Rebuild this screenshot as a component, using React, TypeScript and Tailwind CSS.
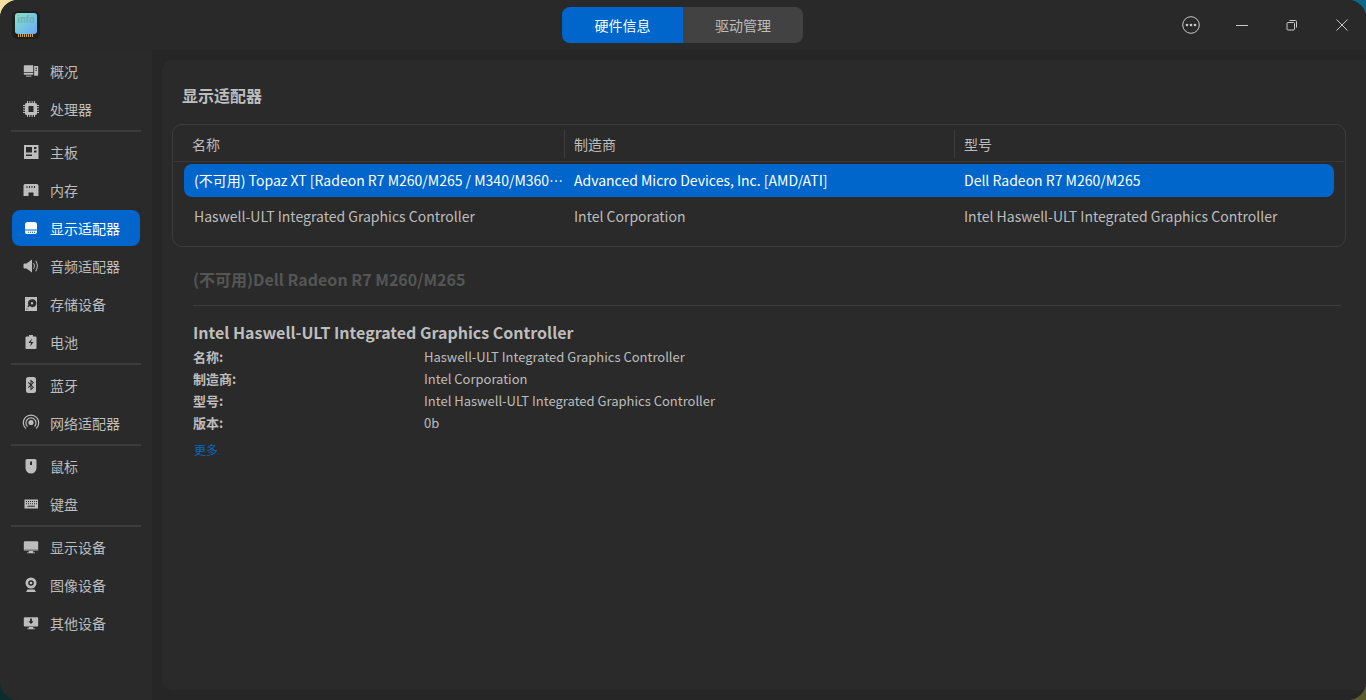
import type { ReactNode } from 'react';

const ICO = 'w-[18px] h-[18px] fill-current';

const icons: Record<string, ReactNode> = {
  overview: (
    <svg viewBox="-1 -1 20 20" className={ICO}>
      <path d="M1 3.500a1 1 0 0 1 1-1h9.500v8H1z" />
      <path d="M1 11.200h10.500v1.300a.8.800 0 0 1-.8.800H1.800a.8.800 0 0 1-.8-.8z" />
      <rect x="3.500" y="14.200" width="6" height="1" />
      <path fillRule="evenodd" d="M12.500 3.500h3.600a.9.900 0 0 1 .9.900v9a.9.900 0 0 1-.9.900h-3.600zM14 5.500v1h1.600v-1zm0 2.200v1h1.600v-1z" />
    </svg>
  ),
  cpu: (
    <svg viewBox="0 0 18 18" className={ICO}>
      <path fillRule="evenodd" d="M4.500 3h9A1.500 1.500 0 0 1 15 4.500v9a1.500 1.500 0 0 1-1.500 1.500h-9A1.500 1.500 0 0 1 3 13.500v-9A1.500 1.500 0 0 1 4.500 3zM6.500 6v6h5V6z" />
      <path d="M5 1h1v2H5zm2.300 0h1v2h-1zm2.400 0h1v2h-1zM12 1h1v2h-1zM5 15h1v2H5zm2.300 0h1v2h-1zm2.400 0h1v2h-1zM12 15h1v2h-1zM1 5h2v1H1zm0 2.300h2v1H1zm0 2.400h2v1H1zM1 12h2v1H1zm14-7h2v1h-2zm0 2.300h2v1h-2zm0 2.400h2v1h-2zM15 12h2v1h-2z" />
    </svg>
  ),
  board: (
    <svg viewBox="0 0 18 18" className={ICO}>
      <path fillRule="evenodd" d="M2 2h14.500v14H2zM4 4v5.500h6V4zm8 0v2h2.500V4zm0 3.500v2h2.500v-2zM4 11.500v1.500h6v-1.500z" />
    </svg>
  ),
  memory: (
    <svg viewBox="0 0 18 18" className={ICO}>
      <path fillRule="evenodd" d="M2.500 3h13l1 1.500V15h-5v-3.500h-5V15h-5V4.500zM4.500 5v2h1V5zm2.500 0v2h1V5zm2.500 0v2h1V5zM12 5v2h1V5z" />
    </svg>
  ),
  display: (
    <svg viewBox="0 0 18 18" className={ICO}>
      <path d="M5.500 3h7A2.500 2.500 0 0 1 15 5.500V10.500H3V5.500A2.500 2.500 0 0 1 5.500 3z" />
      <path fillRule="evenodd" d="M3 11.500h12v1.500a2 2 0 0 1-2 2H5a2 2 0 0 1-2-2zM6 12.800v1h1v-1zm2 0v1h1v-1zm2 0v1h1v-1zm2 0v1h1v-1z" />
    </svg>
  ),
  audio: (
    <svg viewBox="0 0 18 18" className={ICO}>
      <path d="M2.500 6.500h2L10 2.500v13l-5.500-4h-2a1 1 0 0 1-1-1v-3a1 1 0 0 1 1-1z" />
      <path d="M11.800 5.800c1.400 2 1.400 4.400 0 6.400l-.7-.6c1.100-1.700 1.100-3.500 0-5.200z" />
      <path d="M14 3.500c2.400 3.300 2.400 7.700 0 11l-.7-.6c2-2.900 2-6.900 0-9.800z" />
    </svg>
  ),
  disk: (
    <svg viewBox="0 0 18 18" className={ICO}>
      <path fillRule="evenodd" d="M3 2h12v14H3zM10 4.200a4 4 0 0 0-3.600 5.800l-1 1.500 1 .8 1.300-1.200a4 4 0 1 0 2.300-6.900zm0 2.800a1.200 1.200 0 1 1 0 2.400 1.200 1.200 0 0 1 0-2.400zM4.500 13.500v1h1v-1z" />
    </svg>
  ),
  battery: (
    <svg viewBox="0 0 18 18" className={ICO}>
      <path fillRule="evenodd" d="M7 2h4v1.500h2.500a1 1 0 0 1 1 1V15a1 1 0 0 1-1 1h-9a1 1 0 0 1-1-1V4.500a1 1 0 0 1 1-1H7zM9.800 5.500 6.500 10H9l-.8 3.500L11.500 9H9z" />
    </svg>
  ),
  bluetooth: (
    <svg viewBox="0 0 18 18" className={ICO}>
      <path fillRule="evenodd" d="M6.500 1h5A2.500 2.500 0 0 1 14 3.500v11a2.500 2.500 0 0 1-2.500 2.500h-5A2.500 2.500 0 0 1 4 14.500v-11A2.500 2.500 0 0 1 6.500 1zM8.500 3.500v4.200L6.600 6l-.7.700L8.200 9l-2.300 2.300.7.700 1.900-1.700v4.200l3.500-3L9.700 9 12 6.500zm1 2.200 1.200 1L9.500 8zm0 4.300 1.200 1.300-1.200 1z" />
    </svg>
  ),
  network: (
    <svg viewBox="0 0 18 18" className={ICO}>
      <circle cx="9" cy="8.500" r="2.600" />
      <path fill="none" stroke="currentColor" strokeWidth="1.200" d="M5.500 12.500a5 5 0 1 1 7 0" />
      <path fill="none" stroke="currentColor" strokeWidth="1.200" d="M3.800 14.500a7.700 7.700 0 1 1 10.400 0" />
    </svg>
  ),
  mouse: (
    <svg viewBox="0 0 18 18" className={ICO}>
      <path fillRule="evenodd" d="M5 2h8a1.500 1.500 0 0 1 1.500 1.500V11a5.500 5.500 0 0 1-11 0V3.500A1.500 1.500 0 0 1 5 2zM8 4.500V8h2V4.500z" />
    </svg>
  ),
  keyboard: (
    <svg viewBox="0 0 18 18" className={ICO}>
      <path fillRule="evenodd" d="M2.500 4.500h13.500v9H2.500zM4 6v1h1V6zm2 0v1h1V6zm2 0v1h1V6zm2 0v1h1V6zm2 0v1h1V6zm2 0v1h1V6zM4 8.300v1h1v-1zm2 0v1h1v-1zm2 0v1h1v-1zm2 0v1h1v-1zm2 0v1h1v-1zm2 0v1h1v-1zM5.500 10.700v1h7.500v-1z" />
    </svg>
  ),
  monitor: (
    <svg viewBox="-1 -1 20 20" className={ICO}>
      <path d="M2.200 2.500h13.600A1.200 1.200 0 0 1 17 3.700V12H1V3.700a1.200 1.200 0 0 1 1.200-1.200z" />
      <path d="M1 13h16v.5H1zM6.500 13.500h5V15h-5zM4.500 15h9v1h-9z" />
    </svg>
  ),
  camera: (
    <svg viewBox="0 0 18 18" className={ICO}>
      <path fillRule="evenodd" d="M9 1.500a5.500 5.500 0 1 1 0 11 5.500 5.500 0 0 1 0-11zm0 2.700a2.800 2.800 0 1 0 0 5.600 2.800 2.800 0 0 0 0-5.600z" />
      <circle cx="9" cy="7" r="1.300" />
      <path d="M5.500 13.500h7L14 16H4z" />
    </svg>
  ),
  other: (
    <svg viewBox="-1 -1 20 20" className={ICO}>
      <path fillRule="evenodd" d="M2.200 2.500h13.600A1.200 1.200 0 0 1 17 3.700v8.100a1.200 1.200 0 0 1-1.200 1.200H2.200A1.200 1.200 0 0 1 1 11.800V3.700a1.200 1.200 0 0 1 1.200-1.200zM8 4v3H6l3 3.200L12 7h-2V4z" />
      <path d="M6.500 13.500h5V15h-5zM4.500 15h9v1h-9z" />
    </svg>
  ),
};

const groups = [
  [['overview', '概况'], ['cpu', '处理器']],
  [['board', '主板'], ['memory', '内存'], ['display', '显示适配器'], ['audio', '音频适配器'], ['disk', '存储设备'], ['battery', '电池']],
  [['bluetooth', '蓝牙'], ['network', '网络适配器']],
  [['mouse', '鼠标'], ['keyboard', '键盘']],
  [['monitor', '显示设备'], ['camera', '图像设备'], ['other', '其他设备']],
];

const rows = [
  ['(不可用) Topaz XT [Radeon R7 M260/M265 / M340/M360…', 'Advanced Micro Devices, Inc. [AMD/ATI]', 'Dell Radeon R7 M260/M265'],
  ['Haswell-ULT Integrated Graphics Controller', 'Intel Corporation', 'Intel Haswell-ULT Integrated Graphics Controller'],
];

const details = [
  ['名称:', 'Haswell-ULT Integrated Graphics Controller'],
  ['制造商:', 'Intel Corporation'],
  ['型号:', 'Intel Haswell-ULT Integrated Graphics Controller'],
  ['版本:', '0b'],
];

function Logo() {
  return (
    <div className="w-7 h-7 rounded-md bg-[#1e1e1e] flex items-center justify-center">
      <div className="w-[22px] h-[24px] flex flex-col">
        <div className="h-[21px] rounded-[3px] bg-gradient-to-br from-[#86e4c4] to-[#6aa8f8] text-[9px] leading-[10px] pt-[2px] text-center text-[#6fb0b4] font-bold">info</div>
        <div className="h-[3px] mx-[3px] bg-[repeating-linear-gradient(90deg,#d9a520_0_1px,#1e1e1e_1px_2px)]" />
      </div>
    </div>
  );
}

function Sidebar() {
  return (
    <aside className="w-[152px] shrink-0 bg-[#2a2a2a] pt-[2px]">
      {groups.map((group, i) => (
        <div key={i}>
          {i > 0 && <div className="h-[2px] mx-[11px] mt-[2px] mb-[1px] bg-[#3c3c3c]" />}
          {group.map(([icon, label]) => {
            const active = label === '显示适配器';
            return (
              <div key={label} className={`flex items-center h-[38px] ${active ? 'text-white' : 'text-[#bdbdbd]'}`}>
                <div className={`flex items-center w-[128px] ml-3 pl-[10px] rounded-lg ${active ? 'h-9 bg-[#0066cc]' : 'h-[38px]'}`}>
                  {icons[icon]}
                  <span className="ml-[10px] text-sm">{label}</span>
                </div>
              </div>
            );
          })}
        </div>
      ))}
    </aside>
  );
}

export default function App() {
  return (
    <div
      lang="zh-CN"
      className="w-[1366px] h-[700px] overflow-hidden bg-[conic-gradient(#0b6a88_0_25%,#5a5a2a_25%_50%,#0a2e30_50%_75%,#f4dfa0_75%_100%)] text-[#bdbdbd] font-['Noto_Sans_CJK_SC','Noto_Sans',sans-serif]"
    >
      <div className="h-full rounded-[18px] overflow-hidden flex flex-col bg-[#262626]">
        <header className="h-[50px] shrink-0 bg-[#292929] flex items-center relative">
          <div className="ml-3"><Logo /></div>
          <div className="absolute left-[562px] top-[7px] flex h-9 w-[241px] rounded-lg overflow-hidden text-sm">
            <div className="w-[121px] bg-[#0066cc] text-white flex items-center justify-center">硬件信息</div>
            <div className="flex-1 bg-[#424242] text-[#bdbdbd] flex items-center justify-center">驱动管理</div>
          </div>
          <div className="ml-auto flex items-center text-[#c8c8c8]">
            <svg viewBox="0 0 18 18" className="w-[18px] h-[18px] mr-[36px]" fill="none" stroke="currentColor">
              <circle cx="9" cy="9" r="8.300" strokeWidth="1" />
              <circle cx="5" cy="9" r="1.300" fill="currentColor" stroke="none" />
              <circle cx="9" cy="9" r="1.300" fill="currentColor" stroke="none" />
              <circle cx="13" cy="9" r="1.300" fill="currentColor" stroke="none" />
            </svg>
            <svg viewBox="0 0 12 12" className="w-3 h-3 mr-[38px]" stroke="currentColor" strokeWidth="1">
              <path d="M0 6.500h12" />
            </svg>
            <svg viewBox="0 0 12 12" className="w-3 h-3 mr-[38px]" fill="none" stroke="currentColor" strokeWidth="1">
              <rect x="1" y="3.500" width="7.500" height="7.500" rx="1" />
              <path d="M3.500 1.500h6a1 1 0 0 1 1 1v6" />
            </svg>
            <svg viewBox="0 0 12 12" className="w-3 h-3 mr-[18px]" fill="none" stroke="currentColor" strokeWidth="1">
              <path d="M.5.500l11 11M11.500.500l-11 11" />
            </svg>
          </div>
        </header>

        <div className="flex flex-1 min-h-0">
          <Sidebar />
          <main className="flex-1 mt-[10px] ml-[10px] mb-[10px] rounded-l-[10px] bg-[#2a2a2a] pt-[23px] pl-[10px] pr-[20px]">
            <h2 className="ml-[10px] h-6 text-[16px] leading-6 font-bold text-[#bdbdbd]">显示适配器</h2>

            <section className="mt-[17px] h-[123px] border border-[#3d3d3d] rounded-[10px] text-sm">
              <div className="h-[37px] pt-[2px] mx-[1px] border-b border-[#383838] flex items-center">
                <div className="w-[390px] pl-[18px]">名称</div>
                <div className="w-[390px] h-7 pl-[9px] flex items-center border-l border-[#3d3d3d]">制造商</div>
                <div className="flex-1 h-7 pl-[9px] flex items-center border-l border-[#3d3d3d]">型号</div>
              </div>
              <div className="mx-[11px] mt-[2px] flex flex-col gap-[3px]">
                {rows.map((r, i) => (
                  <div key={i} className={`grid grid-cols-[380px_390px_1fr] items-center h-[33px] pb-[2px] rounded-lg pl-[10px] ${i === 0 ? 'bg-[#0066cc] text-white' : ''}`}>
                    <div className="whitespace-nowrap">{r[0]}</div>
                    <div>{r[1]}</div>
                    <div>{r[2]}</div>
                  </div>
                ))}
              </div>
            </section>

            <div className="ml-[21px] mr-[5px]">
              <h3 className="mt-[20px] h-6 text-[16px] leading-6 font-bold text-[#555555]">(不可用)Dell Radeon R7 M260/M265</h3>
              <div className="mt-[14px] h-px bg-[#3d3d3d]" />
              <h3 className="mt-[14px] mb-[2px] h-6 text-[16px] leading-6 font-bold text-[#bdbdbd]">Intel Haswell-ULT Integrated Graphics Controller</h3>
              <div className="text-[13px]">
                {details.map(([k, v]) => (
                  <div key={k} className="flex h-[22px] items-center">
                    <div className="w-[231px] font-bold">{k}</div>
                    <div>{v}</div>
                  </div>
                ))}
              </div>
              <div className="mt-[8px] ml-px text-xs text-[#0b66c2]">更多</div>
            </div>
          </main>
        </div>
      </div>
    </div>
  );
}
